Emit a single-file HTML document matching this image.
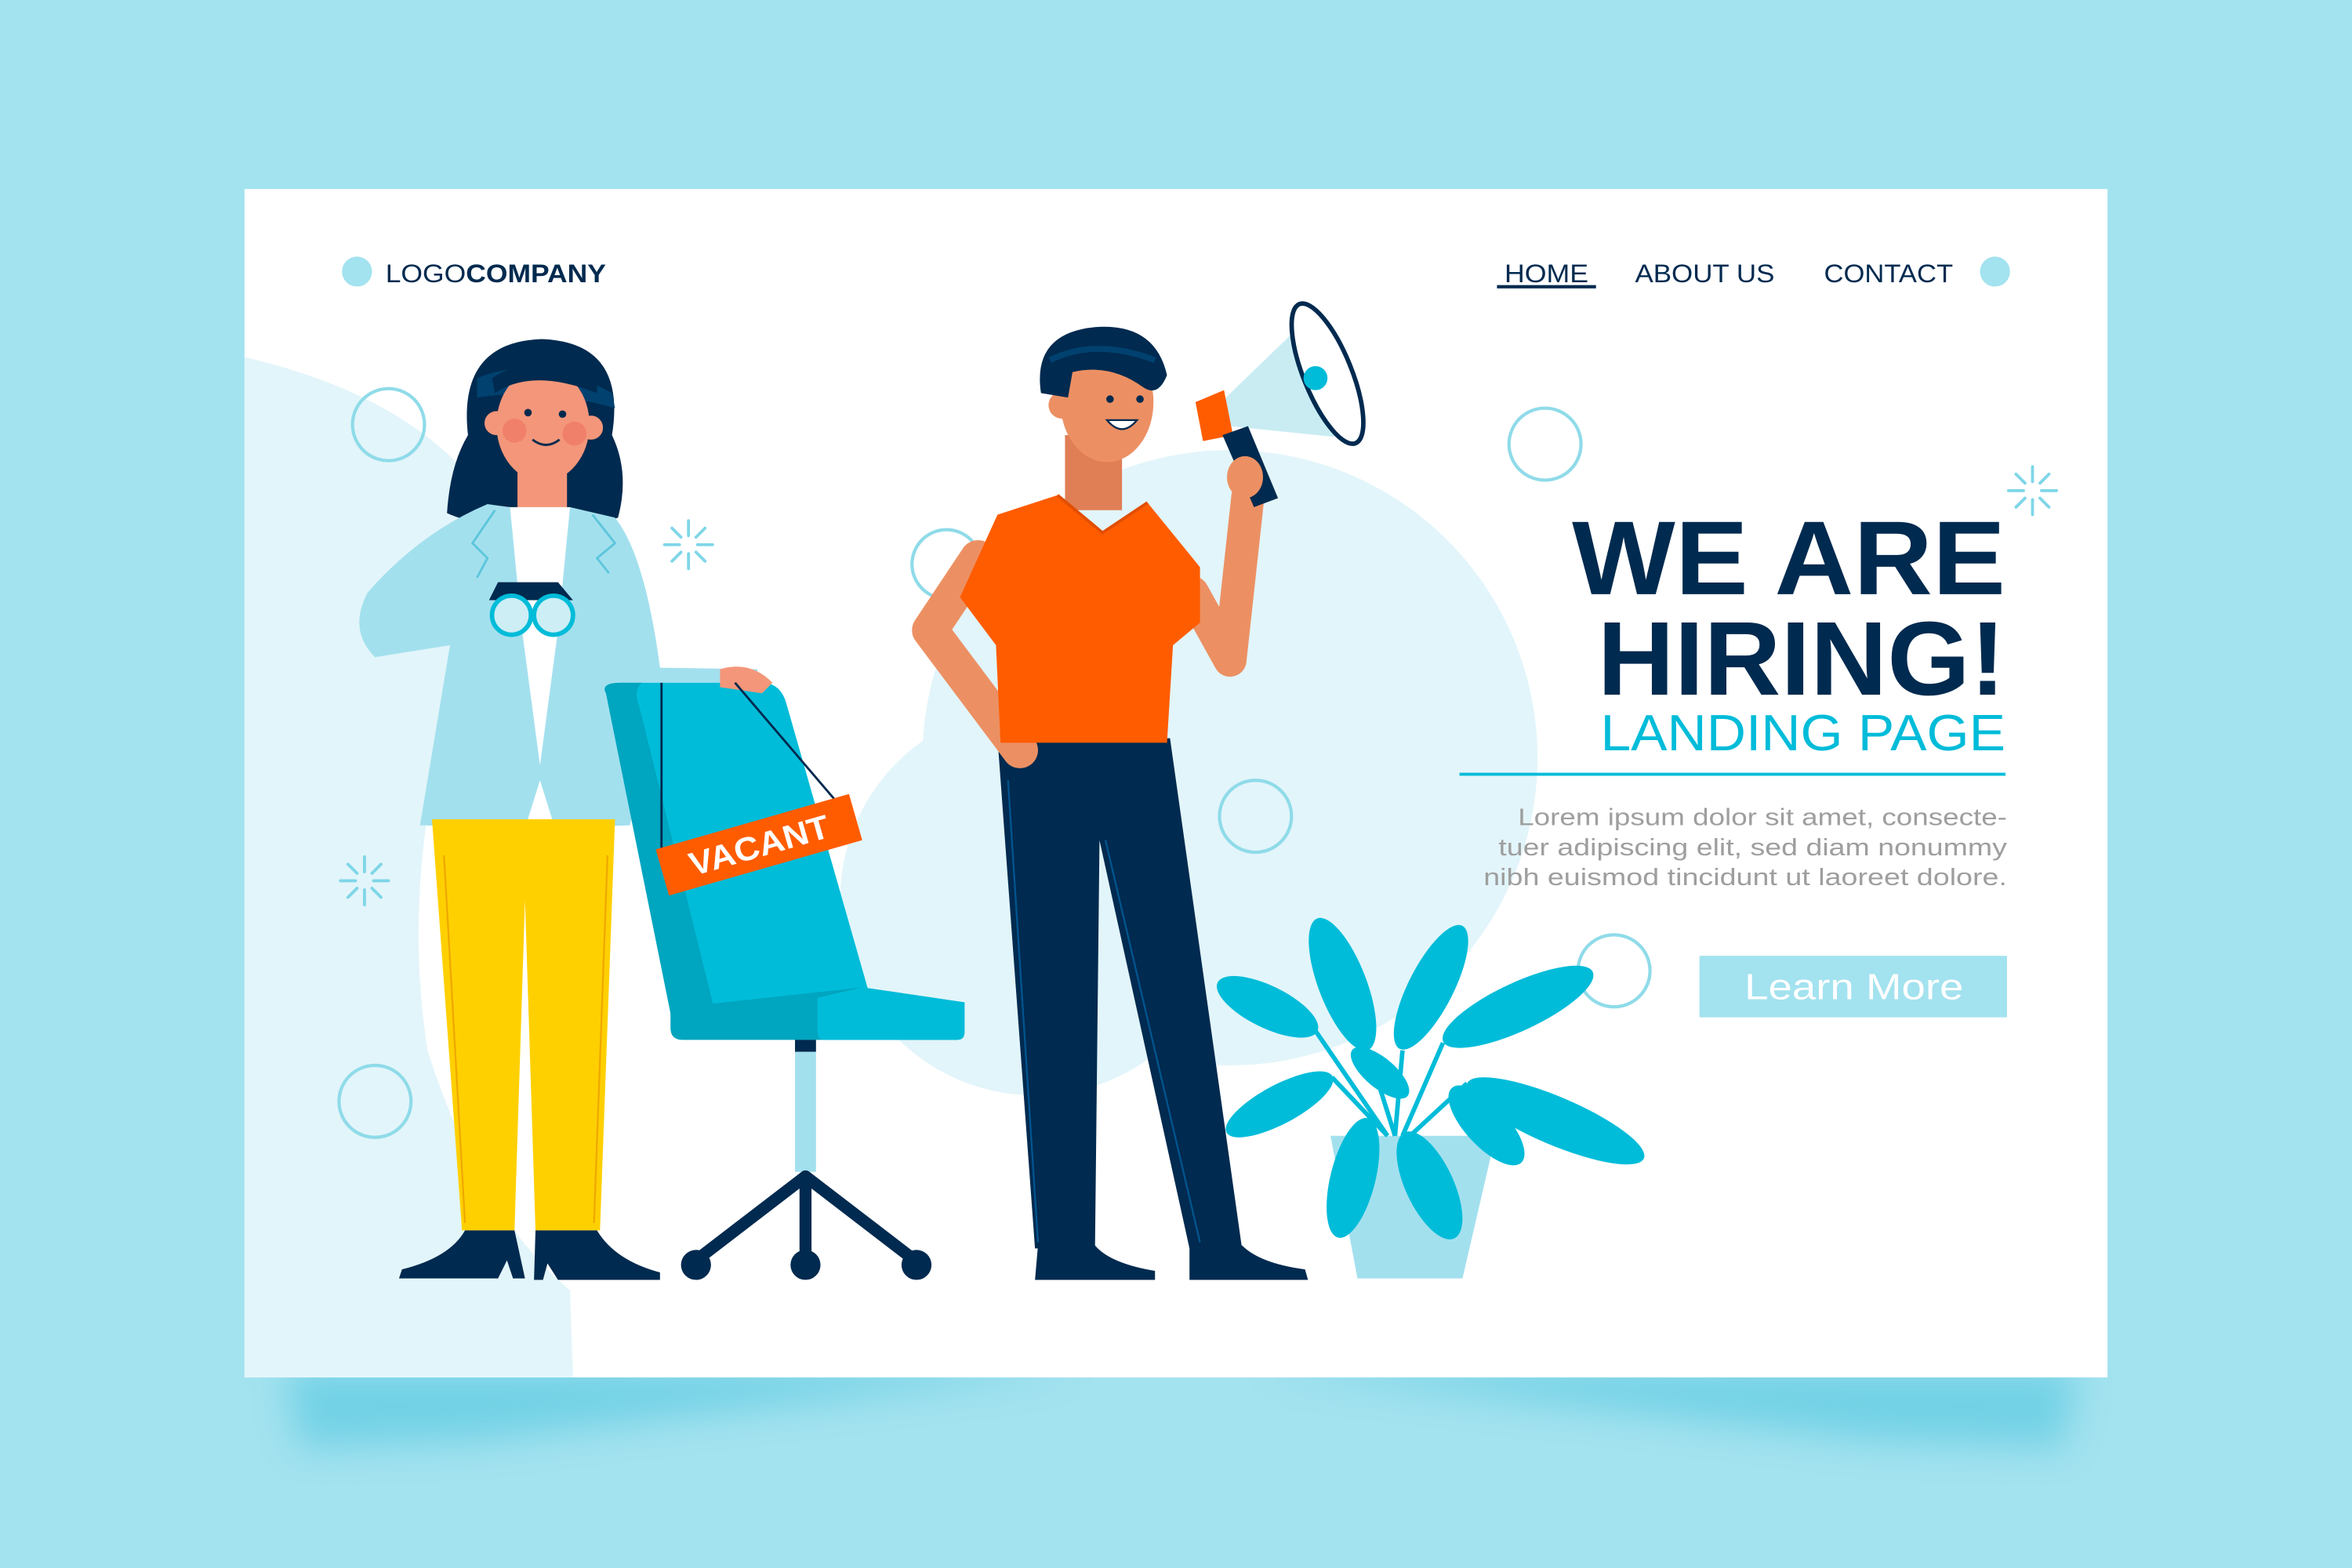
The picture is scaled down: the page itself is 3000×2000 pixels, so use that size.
<!DOCTYPE html>
<html><head><meta charset="utf-8"><style>
html,body{margin:0;padding:0;width:3000px;height:2000px;overflow:hidden;background:#a3e2ef}
svg{display:block}
</style></head><body>
<svg width="3000" height="2000" viewBox="0 0 1568 1045" preserveAspectRatio="none" xmlns="http://www.w3.org/2000/svg">
<defs>
<filter id="bl" x="-20%" y="-200%" width="140%" height="500%"><feGaussianBlur stdDeviation="12"/></filter>
</defs>
<rect width="1568" height="1045" fill="#a3e2ef"/>
<!-- shadow -->
<g filter="url(#bl)" opacity="0.55">
<path d="M190,912 L720,912 L320,960 L200,965 Z" fill="#4cc4de"/>
<path d="M840,912 L1385,912 L1375,965 L1250,960 Z" fill="#4cc4de"/>
</g>
<!-- card -->
<rect x="163" y="126" width="1242" height="792" fill="#fff"/>
<!-- pale blobs -->
<path d="M163,238 Q300,270 340,360 Q260,540 285,700 Q320,810 380,860 L382,918 L163,918 Z" fill="#e2f5fa"/>
<circle cx="820" cy="505" r="205" fill="#e2f5fa"/>
<circle cx="690" cy="600" r="130" fill="#e2f5fa"/>
<!-- outline circles -->
<g fill="none" stroke="#8fdbe9" stroke-width="2.2">
<circle cx="259" cy="283" r="24"/><circle cx="631" cy="376" r="23"/><circle cx="1030" cy="296" r="24"/>
<circle cx="837" cy="544" r="24"/><circle cx="1076" cy="647" r="24"/><circle cx="250" cy="734" r="24"/>
</g>
<!-- sparkles -->
<g stroke="#7fd6e8" stroke-width="2" stroke-linecap="round">
<g transform="translate(459,363)"><path d="M0,-16V-6M0,6V16M-16,0H-6M6,0H16M-11,-11L-5,-5M5,5L11,11M11,-11L5,-5M-5,5L-11,11"/></g>
<g transform="translate(243,587)"><path d="M0,-16V-6M0,6V16M-16,0H-6M6,0H16M-11,-11L-5,-5M5,5L11,11M11,-11L5,-5M-5,5L-11,11"/></g>
<g transform="translate(1355,327)"><path d="M0,-16V-6M0,6V16M-16,0H-6M6,0H16M-11,-11L-5,-5M5,5L11,11M11,-11L5,-5M-5,5L-11,11"/></g>
</g>
<!-- header -->
<circle cx="238" cy="181" r="10" fill="#a3e2ef"/>
<text x="257" y="188" font-family="Liberation Sans, sans-serif" font-size="17" fill="#002a4f" textLength="147" lengthAdjust="spacingAndGlyphs">LOGO<tspan font-weight="bold">COMPANY</tspan></text>
<g font-family="Liberation Sans, sans-serif" font-size="17" fill="#002a4f">
<text x="1003" y="188" textLength="56" lengthAdjust="spacingAndGlyphs">HOME</text>
<text x="1090" y="188" textLength="93" lengthAdjust="spacingAndGlyphs">ABOUT US</text>
<text x="1216" y="188" textLength="86" lengthAdjust="spacingAndGlyphs">CONTACT</text>
</g>
<rect x="998" y="190" width="66" height="2.2" fill="#002a4f"/>
<circle cx="1330" cy="181" r="10" fill="#a3e2ef"/>
<!-- heading -->
<g font-family="Liberation Sans, sans-serif" font-weight="900" fill="#002a4f" text-anchor="end">
<text x="1337" y="396" font-size="70" textLength="289" lengthAdjust="spacingAndGlyphs">WE ARE</text>
<text x="1337" y="463" font-size="70" textLength="272" lengthAdjust="spacingAndGlyphs">HIRING!</text>
</g>
<text x="1337" y="500" text-anchor="end" font-family="Liberation Sans, sans-serif" font-size="34" fill="#00bcd9" textLength="270" lengthAdjust="spacingAndGlyphs">LANDING PAGE</text>
<rect x="973" y="515" width="364" height="2" fill="#00bcd9"/>
<g font-family="Liberation Sans, sans-serif" font-size="16" fill="#9e9e9e" text-anchor="end">
<text x="1338" y="550" textLength="326" lengthAdjust="spacingAndGlyphs">Lorem ipsum dolor sit amet, consecte-</text>
<text x="1338" y="570" textLength="339" lengthAdjust="spacingAndGlyphs">tuer adipiscing elit, sed diam nonummy</text>
<text x="1338" y="590" textLength="349" lengthAdjust="spacingAndGlyphs">nibh euismod tincidunt ut laoreet dolore.</text>
</g>
<rect x="1133" y="637" width="205" height="41" fill="#a3e2ef"/>
<text x="1236" y="666" text-anchor="middle" font-family="Liberation Sans, sans-serif" font-size="24" fill="#fff" textLength="146" lengthAdjust="spacingAndGlyphs">Learn More</text>

<!-- WOMAN -->
<path d="M298,342 Q300,310 312,290 Q305,228 361,226 Q418,228 408,290 Q420,315 412,345 Q395,352 380,345 L340,345 Q320,352 298,342 Z" fill="#002a4f"/>
<path d="M318,252 Q360,235 408,262 L410,272 Q360,258 318,265 Z" fill="#00416f"/>
<rect x="345" y="305" width="33" height="40" fill="#f4967a"/>
<ellipse cx="362" cy="283" rx="31" ry="38" fill="#f4967a"/>
<circle cx="331" cy="282" r="8" fill="#f4967a"/><circle cx="394" cy="285" r="8" fill="#f4967a"/>
<circle cx="343" cy="287" r="8" fill="#f0806a"/><circle cx="383" cy="289" r="8" fill="#f0806a"/>
<path d="M330,262 Q355,245 398,262 L398,250 Q360,232 328,252 Z" fill="#002a4f"/>
<circle cx="352" cy="275" r="2.5" fill="#002a4f"/><circle cx="375" cy="276" r="2.5" fill="#002a4f"/>
<path d="M355,293 Q364,300 373,293" fill="none" stroke="#002a4f" stroke-width="1.5"/>
<!-- shirt + jacket -->
<path d="M338,338 L380,338 L378,515 L345,515 Z" fill="#fff"/>
<path d="M325,336 L340,338 L348,420 L360,510 L372,420 L380,338 L410,345 Q430,370 440,445 L505,446 L505,456 L440,458 L420,550 L370,552 L360,520 L350,552 L280,550 L300,430 L250,438 Q232,420 245,395 Q280,355 325,336 Z" fill="#a3e0ee"/>
<path d="M330,340 L315,362 L325,372 L318,385 M395,343 L410,362 L398,372 L406,382" fill="none" stroke="#5cc6dc" stroke-width="1.5"/>
<!-- binoculars -->
<path d="M326,400 L332,388 L372,388 L382,400 Z" fill="#002a4f"/>
<circle cx="341" cy="410" r="13" fill="#cdeef5" stroke="#00bcd9" stroke-width="3"/>
<circle cx="369" cy="410" r="13" fill="#cdeef5" stroke="#00bcd9" stroke-width="3"/>
<!-- pants -->
<path d="M288,546 L410,546 L400,820 L357,820 L350,600 L343,820 L308,820 Z" fill="#ffd000"/>
<path d="M296,570 L310,815 M405,570 L396,815" stroke="#f0a800" stroke-width="1.2" fill="none"/>
<!-- shoes -->
<path d="M310,820 L343,820 L350,852 L342,852 L338,840 L332,852 L266,852 L268,846 Q300,838 310,820 Z" fill="#002a4f"/>
<path d="M357,820 L398,820 Q410,840 440,848 L440,853 L372,853 L365,842 L362,853 L356,853 Z" fill="#002a4f"/>

<!-- CHAIR -->
<path d="M404,462 Q400,455 414,455 L508,455 Q520,455 524,468 L580,664 L450,690 Z" fill="#00bcd9"/>
<path d="M404,462 Q400,455 414,455 L428,455 Q422,460 426,470 L478,680 L450,690 Z" fill="#00a5bf"/>
<path d="M447,672 L575,658 L643,668 L643,688 Q643,693 638,693 L455,693 Q447,693 447,685 Z" fill="#00a5bf"/>
<path d="M545,665 L575,658 L643,668 L643,688 Q643,693 638,693 L550,693 Q545,693 545,688 Z" fill="#00bcd9"/>
<rect x="530" y="693" width="14" height="8" fill="#002a4f"/>
<rect x="530" y="701" width="14" height="80" fill="#a3e0ee"/>
<g stroke="#002a4f" stroke-width="8" stroke-linecap="round" fill="none">
<path d="M537,784 L464,840 M537,784 L537,838 M537,784 L610,840"/>
</g>
<circle cx="464" cy="843" r="10" fill="#002a4f"/><circle cx="537" cy="843" r="10" fill="#002a4f"/><circle cx="611" cy="843" r="10" fill="#002a4f"/>
<path d="M480,446 Q500,440 515,455 L508,462 L480,458 Z" fill="#f4967a"/>
<path d="M441,455 L441,565 M490,455 L560,537" stroke="#002a4f" stroke-width="1.5" fill="none"/>
<g transform="translate(506,563) rotate(-16)">
<rect x="-67" y="-16" width="134" height="32" fill="#ff5c00"/>
<text x="0" y="8" text-anchor="middle" font-family="Liberation Sans, sans-serif" font-weight="bold" font-size="22" fill="#fff" textLength="96" lengthAdjust="spacingAndGlyphs">VACANT</text>
</g>

<!-- MAN -->
<path d="M665,492 L780,492 L828,832 L793,832 L733,560 L730,832 L690,832 Z" fill="#002a4f"/>
<path d="M672,520 L692,828 M737,560 L800,828" stroke="#00558f" stroke-width="1.2" fill="none"/>
<path d="M692,830 L730,830 Q740,842 770,847 L770,853 L690,853 Z" fill="#002a4f"/>
<path d="M793,830 L828,830 Q840,842 870,846 L872,853 L793,853 Z" fill="#002a4f"/>
<polyline points="652,372 620,420 680,500" fill="none" stroke="#ec9063" stroke-width="24" stroke-linecap="round" stroke-linejoin="round"/>
<polyline points="795,395 820,440 832,330" fill="none" stroke="#ec9063" stroke-width="22" stroke-linecap="round" stroke-linejoin="round"/>
<rect x="710" y="290" width="38" height="50" fill="#e07e55"/>
<path d="M665,343 L705,330 L735,355 L765,335 L800,378 L800,415 L782,430 L778,495 L667,495 L664,430 L640,398 Z" fill="#ff5c00"/>
<path d="M705,330 L735,355 L765,335" fill="none" stroke="#e24e00" stroke-width="2"/>
<ellipse cx="738" cy="268" rx="31" ry="40" fill="#ec9063"/>
<circle cx="708" cy="270" r="9" fill="#ec9063"/>
<path d="M694,262 Q688,222 730,218 Q770,215 778,250 Q772,265 762,258 Q740,242 715,248 L712,265 Z" fill="#002a4f"/>
<path d="M700,240 Q730,225 770,240" stroke="#00416f" stroke-width="4" fill="none"/>
<circle cx="740" cy="266" r="2.5" fill="#002a4f"/><circle cx="760" cy="266" r="2.5" fill="#002a4f"/>
<path d="M738,280 Q748,292 758,280 Z" fill="#fff" stroke="#002a4f" stroke-width="1.2"/>
<!-- megaphone -->
<path d="M812,270 L872,212 Q905,248 898,292 L820,284 Z" fill="#c9ecf3"/>
<ellipse cx="885" cy="249" rx="16" ry="50" transform="rotate(-22 885 249)" fill="#fff" stroke="#002a4f" stroke-width="3"/>
<circle cx="877" cy="252" r="8" fill="#00bcd9"/>
<path d="M797,268 L816,260 L822,290 L802,294 Z" fill="#ff5c00"/>
<path d="M815,290 L832,284 L852,332 L836,338 Z" fill="#002a4f"/>
<ellipse cx="830" cy="318" rx="12" ry="14" fill="#ec9063"/>

<!-- PLANT -->
<path d="M887,757 L997,757 L975,852 L905,852 Z" fill="#a3e0ee"/>
<g stroke="#00bcd9" stroke-width="3" fill="none">
<path d="M930,757 L912,700 M930,757 L935,700 M935,757 L962,695 M940,757 L978,722 M925,757 L877,687 M925,757 L888,718"/>
</g>
<g fill="#00bcd9">
<ellipse cx="895" cy="656" rx="47" ry="16" transform="rotate(69 895 656)"/>
<ellipse cx="954" cy="658" rx="46" ry="15" transform="rotate(-63 954 658)"/>
<ellipse cx="845" cy="671" rx="37" ry="14" transform="rotate(26 845 671)"/>
<ellipse cx="853" cy="736" rx="40" ry="13" transform="rotate(-28 853 736)"/>
<ellipse cx="1012" cy="671" rx="55" ry="16" transform="rotate(-25 1012 671)"/>
<ellipse cx="1037" cy="747" rx="64" ry="16" transform="rotate(23 1037 747)"/>
<ellipse cx="991" cy="750" rx="34" ry="14" transform="rotate(47 991 750)"/>
<ellipse cx="920" cy="715" rx="24" ry="10" transform="rotate(40 920 715)"/>
<ellipse cx="902" cy="785" rx="41" ry="15" transform="rotate(104 902 785)"/>
<ellipse cx="953" cy="790" rx="39" ry="16" transform="rotate(65 953 790)"/>
</g>
</svg>
</body></html>
